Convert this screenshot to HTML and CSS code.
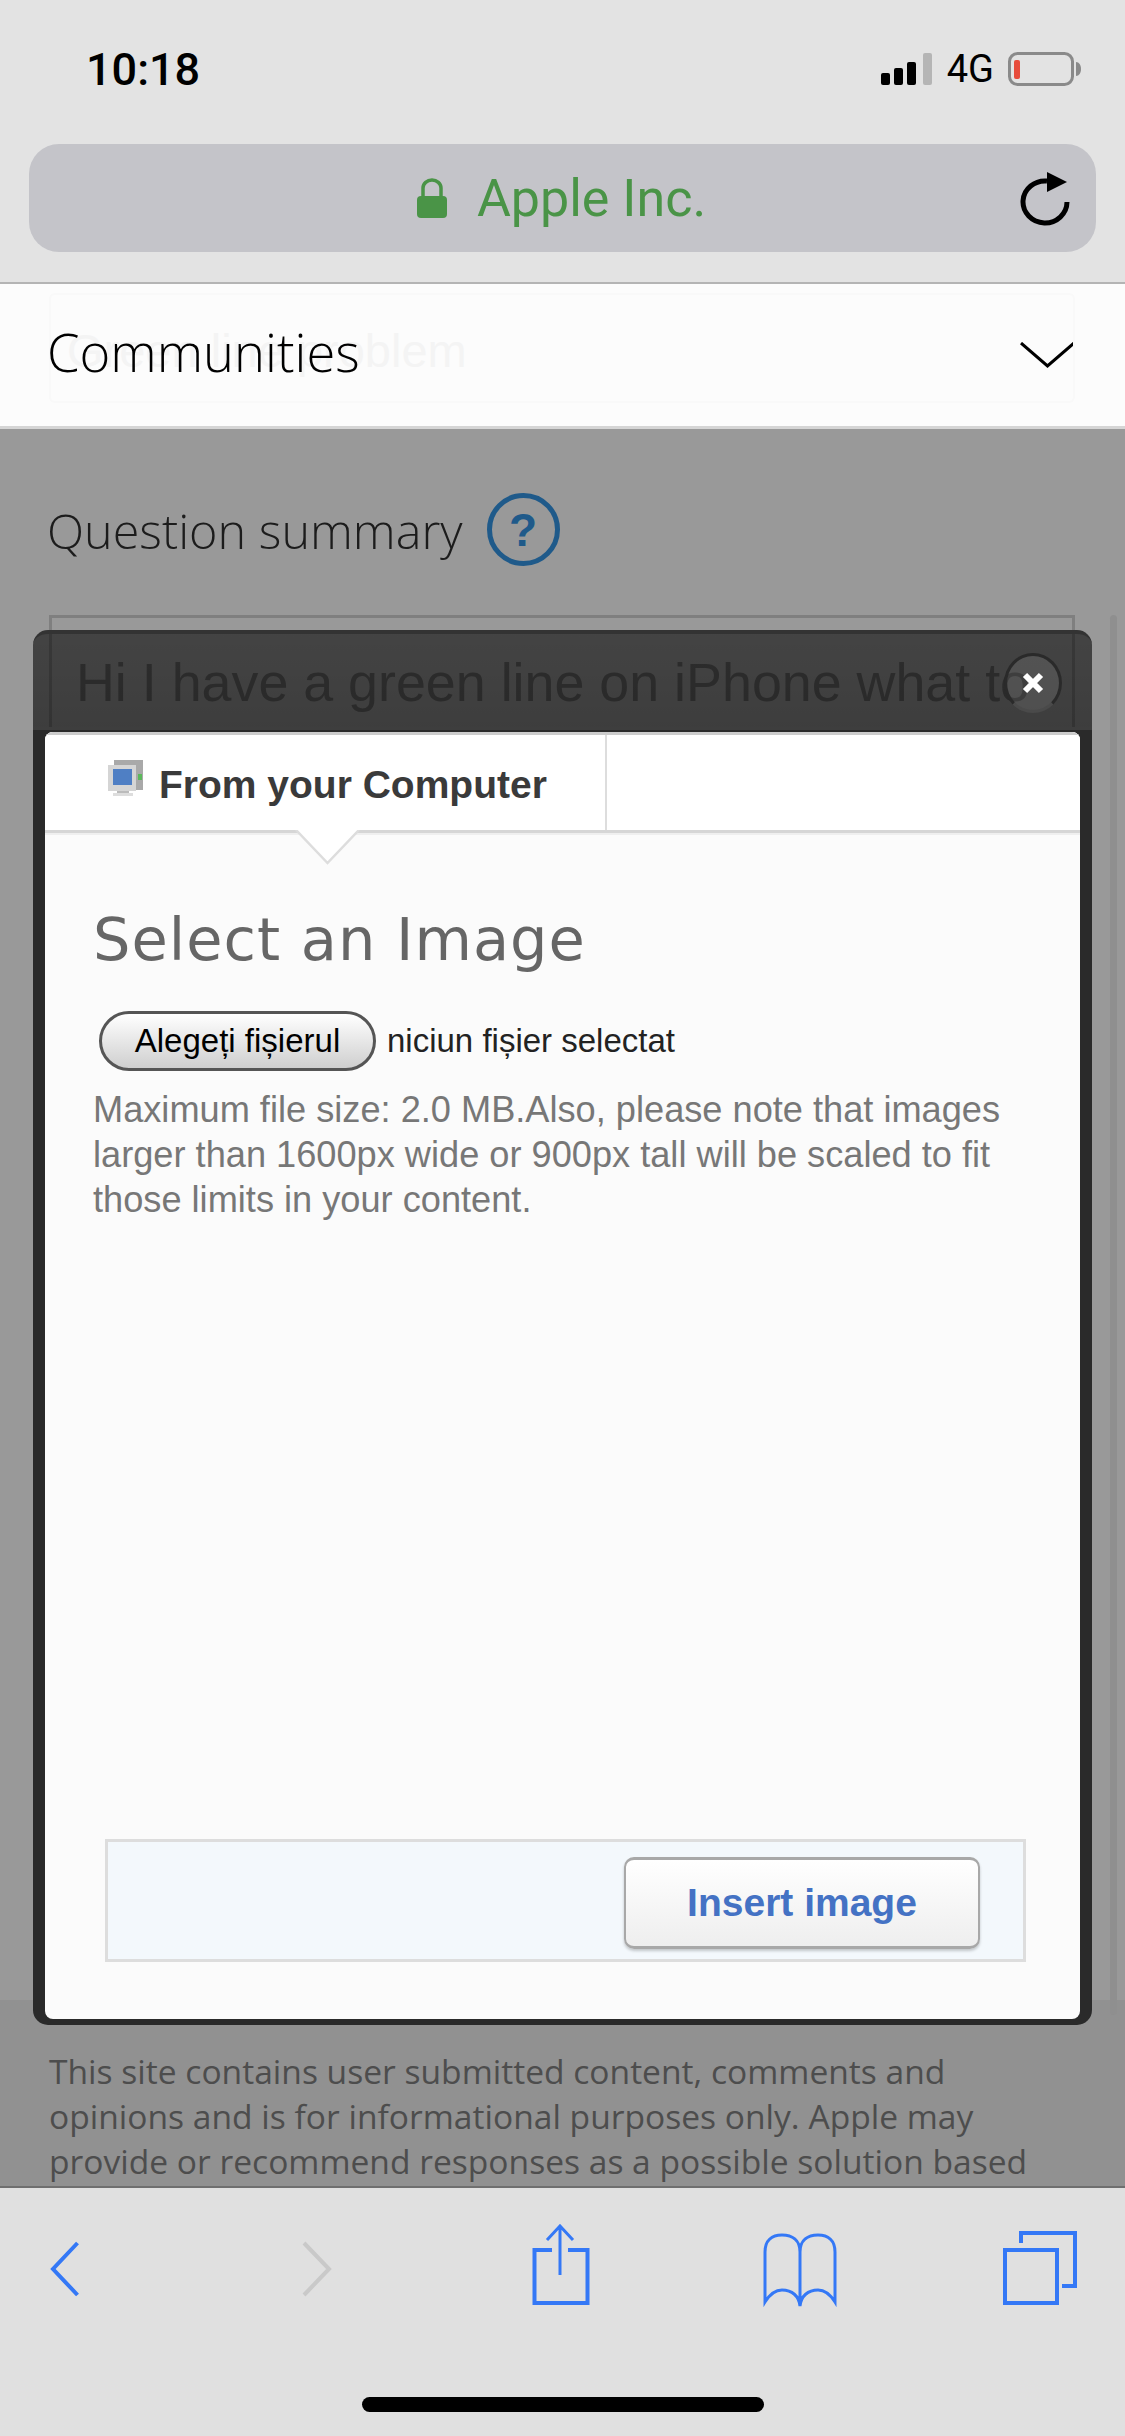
FILE: index.html
```html
<!DOCTYPE html>
<html lang="en">
<head>
  <meta charset="UTF-8">
  <title>Apple Communities</title>
  <link rel="stylesheet" href="styles.css">
</head>
<body>
  <div class="phone">
    <!-- Safari chrome -->
    <div class="chrome">
      <div class="status">
        <span class="time">10:18</span>
        <div class="status-right">
          <svg class="signal" width="51" height="32" viewBox="0 0 51 32">
            <rect x="0" y="20" width="9" height="12" rx="2"/>
            <rect x="13" y="15" width="9" height="17" rx="2"/>
            <rect x="26" y="9" width="9" height="23" rx="2"/>
            <rect x="42" y="0" width="9" height="32" rx="2" fill="#b5b5b5"/>
          </svg>
          <span class="network">4G</span>
          <svg class="battery" width="73" height="34" viewBox="0 0 73 34">
            <rect x="1.5" y="1.5" width="63" height="31" rx="8" fill="none" stroke="#8a8a8a" stroke-width="3"/>
            <rect x="6" y="8" width="6" height="19" rx="2" fill="#e74c3c"/>
            <path d="M68 10c3 0 5 3 5 7s-2 7-5 7z" fill="#8a8a8a"/>
          </svg>
        </div>
      </div>
      <div class="url-bar">
        <svg class="lock" width="30" height="40" viewBox="0 0 30 40">
          <path d="M6 19V10a9 8 0 0 1 18 0v9" fill="none" stroke="#4a9447" stroke-width="3.5"/>
          <rect x="0" y="18" width="30" height="22" rx="4" fill="#4a9447"/>
        </svg>
        <span class="url-text">Apple Inc.</span>
        <svg class="reload" width="50" height="56" viewBox="0 0 50 56">
          <path d="M27 11A22 21 0 1 0 47 32" fill="none" stroke="#000" stroke-width="5"/>
          <polygon points="27,2 47,12 27,22"/>
        </svg>
      </div>
    </div>

    <div class="communities">
      <div class="ghost-field">Green line problem</div>
      <span class="communities-label">Communities</span>
      <svg width="55" height="26" viewBox="0 0 55 26">
        <polyline points="1,1 27.5,24 54,1" fill="none" stroke="#000" stroke-width="3"/>
      </svg>
    </div>

    <!-- Dimmed page with the upload dialog on top -->
    <div class="page">
      <div class="question">
        <div class="question-row">
          <span class="question-label">Question summary</span>
          <span class="help">?</span>
        </div>
        <div class="summary-input">Hi I have a green line on iPhone what to</div>
      </div>
      <div class="scrollbar"></div>

      <div class="legal">This site contains user submitted content, comments and opinions and is for informational purposes only. Apple may provide or recommend responses as a possible solution based</div>

      <div class="modal">
        <div class="modal-head">
          <button class="close">
            <svg width="22" height="22" viewBox="0 0 22 22">
              <path d="M3 3l16 16M19 3L3 19" stroke="#fff" stroke-width="6"/>
            </svg>
          </button>
        </div>
        <div class="modal-frame">
          <div class="modal-body">
            <div class="tabs">
              <div class="tab">
                <svg width="35" height="36" viewBox="0 0 35 36">
                  <rect x="6" y="0" width="29" height="30" fill="#a9a9a9"/>
                  <rect x="0" y="5" width="28" height="26" fill="#d5d5d5"/>
                  <rect x="5" y="9" width="19" height="16" fill="#4f7fc4"/>
                  <rect x="9" y="31" width="12" height="2" fill="#bbb"/>
                  <rect x="5" y="33" width="20" height="3" fill="#ddd"/>
                  <rect x="30" y="14" width="4" height="6" fill="#5cb85c"/>
                </svg>
                <span>From your Computer</span>
              </div>
              <div class="tab-empty"></div>
              <svg class="tab-arrow" width="65" height="35" viewBox="0 0 65 35">
                <polyline points="1,0 32.5,33 64,0" fill="#fff" stroke="#ddd" stroke-width="2.5"/>
              </svg>
            </div>
            <div class="upload">
              <h1>Select an Image</h1>
              <div class="file-row">
                <button class="file-btn">Alegeți fișierul</button>
                <span class="file-name">niciun fișier selectat</span>
              </div>
              <p>Maximum file size: 2.0 MB.Also, please note that images larger than 1600px wide or 900px tall will be scaled to fit those limits in your content.</p>
            </div>
            <div class="modal-foot">
              <button class="insert">Insert image</button>
            </div>
          </div>
        </div>
      </div>
    </div>

    <!-- Safari toolbar -->
    <div class="toolbar">
      <div class="toolbar-icons">
        <svg width="100" height="90" viewBox="0 0 100 90">
          <polyline points="62.5,19 38,45 62.5,71" fill="none" stroke="#3478f6" stroke-width="4"/>
        </svg>
        <svg width="100" height="90" viewBox="0 0 100 90">
          <polyline points="38,19 63,45 38,71" fill="none" stroke="#c9c9c9" stroke-width="4"/>
        </svg>
        <svg width="100" height="90" viewBox="0 0 100 90" fill="none" stroke="#3478f6">
          <path d="M42 26H24.500V79H77.500V26H58" stroke-width="4"/>
          <path d="M50 2V51M37 16L50 2L63 16" stroke-width="3"/>
        </svg>
        <svg width="100" height="90" viewBox="0 0 100 90" fill="none" stroke="#3478f6" stroke-width="3">
          <path d="M15 78V28C15 16 22 11 32 11C42 11 50 16 50 28C50 16 58 11 68 11C78 11 85 16 85 28V78C80 70 74 66 68 66C58 66 51 72 50 82C49 72 42 66 32 66C26 66 20 70 15 78ZM50 28V82"/>
        </svg>
        <svg width="100" height="90" viewBox="0 0 100 90" fill="none" stroke="#3478f6" stroke-width="4">
          <path d="M31 19V9H85V62H72"/>
          <rect x="15" y="26" width="52" height="53"/>
        </svg>
      </div>
      <div class="home-bar"></div>
    </div>
  </div>
</body>
</html>
```

FILE: styles.css
```css
body {
  margin: 0;
  font-family: "Liberation Sans", Arial, sans-serif;
}

.phone {
  display: flex;
  flex-direction: column;
  width: 1125px;
  height: 2436px;
  overflow: hidden;
}

/* Top chrome */
.chrome {
  height: 282px;
  padding-top: 44px;
  box-sizing: border-box;
  background-color: #e3e3e3;
}

.status {
  display: flex;
  justify-content: space-between;
  align-items: center;
  height: 50px;
  padding: 0 44px 0 86px;
}

.time {
  font-family: Roboto, sans-serif;
  font-size: 45px;
  font-weight: 500;
  color: #000;
}

.status-right {
  display: flex;
  align-items: center;
}

.network {
  margin: 0 14px 0 15px;
  font-family: Roboto, sans-serif;
  font-size: 38px;
  color: #000;
}

.url-bar {
  position: relative;
  display: flex;
  justify-content: center;
  align-items: center;
  gap: 30px;
  height: 108px;
  margin: 50px 29px 0;
  padding-right: 2px;
  background-color: #c4c4c9;
  border-radius: 30px;
}

.url-text {
  font-family: Roboto, sans-serif;
  font-size: 52px;
  color: #4a9447;
}

.reload {
  position: absolute;
  top: 26px;
  right: 26px;
}

/* Communities bar */
.communities {
  position: relative;
  display: flex;
  justify-content: space-between;
  align-items: center;
  height: 147px;
  padding: 0 50px 0 47px;
  box-sizing: border-box;
  background-color: #fcfcfc;
  border-top: 2px solid #b4b4b4;
  border-bottom: 3px solid #d5d5d5;
}

.communities-label {
  position: relative;
  margin-bottom: 8px;
  font-family: "Open Sans", sans-serif;
  font-size: 52.5px;
  font-weight: 300;
  color: #000;
}

.ghost-field {
  position: absolute;
  top: 9px;
  left: 49px;
  width: 1026px;
  height: 110px;
  box-sizing: border-box;
  padding-left: 16px;
  line-height: 112px;
  font-size: 47px;
  color: #f4f4f4;
  border: 2px solid #f9f9f9;
  border-radius: 6px;
}

/* Dimmed page */
.page {
  position: relative;
  flex: 1;
  display: flex;
  flex-direction: column;
  justify-content: space-between;
  background-color: #999;
  overflow: hidden;
}

.question {
  padding: 64px 50px 0 49px;
}

.question-row {
  display: flex;
  align-items: center;
  gap: 24px;
}

.question-label {
  margin-left: -2px;
  font-family: "Open Sans", sans-serif;
  font-size: 48.5px;
  font-weight: 300;
  color: #1c1c1c;
}

.help {
  display: flex;
  justify-content: center;
  align-items: center;
  width: 73px;
  height: 73px;
  box-sizing: border-box;
  font-size: 46px;
  font-weight: bold;
  color: #1f5a8a;
  border: 5px solid #1f5a8a;
  border-radius: 50%;
}

.summary-input {
  height: 112px;
  margin-top: 49px;
  padding: 33px 0 0 24px;
  box-sizing: border-box;
  overflow: hidden;
  white-space: nowrap;
  font-size: 53.8px;
  color: #666;
  border: 3px solid #7f7f7f;
  border-bottom: none;
}

.scrollbar {
  position: absolute;
  top: 186px;
  right: 8px;
  width: 7px;
  height: 1400px;
  background-color: #8f8f8f;
  border-radius: 4px;
}

.legal {
  height: 186px;
  padding: 49px 91px 0 49px;
  box-sizing: border-box;
  overflow: hidden;
  font-family: "Open Sans", sans-serif;
  font-size: 33.6px;
  line-height: 45px;
  color: #4d4d4d;
  background-color: #919191;
}

/* Upload dialog */
.modal {
  position: absolute;
  top: 201px;
  left: 33px;
  width: 1059px;
  height: 1395px;
  display: flex;
  flex-direction: column;
}

.modal-head {
  position: relative;
  height: 100px;
  box-sizing: border-box;
  background: linear-gradient(rgba(0, 0, 0, 0.56), rgba(0, 0, 0, 0.6));
  border-top: 4px solid #333;
  border-bottom: 3px solid #3e3e3e;
  border-radius: 15px 15px 0 0;
}

.close {
  position: absolute;
  top: 19px;
  right: 30px;
  display: flex;
  justify-content: center;
  align-items: center;
  width: 58px;
  height: 60px;
  padding: 0;
  background-color: rgba(255, 255, 255, 0.09);
  border: 3px solid #2a2a2a;
  border-bottom-color: #4a4a4a;
  border-radius: 50%;
}

.modal-frame {
  flex: 1;
  display: flex;
  padding: 2px 12px 6px;
  background-color: #2a2a2a;
  border-radius: 0 0 15px 15px;
}

.modal-body {
  flex: 1;
  display: flex;
  flex-direction: column;
  background-color: #fbfbfb;
  border-radius: 8px;
  overflow: hidden;
}

.tabs {
  position: relative;
  display: flex;
  flex-shrink: 0;
  height: 101px;
  margin-bottom: 2px;
  box-sizing: border-box;
  background-color: #fff;
  border-top: 3px solid #ccc;
  border-bottom: 3px solid #d6d6d6;
  box-shadow: 0 2px 0 #efefef;
}

.tab {
  display: flex;
  align-items: center;
  gap: 16px;
  width: 562px;
  padding: 5px 0 0 63px;
  box-sizing: border-box;
  font-size: 39px;
  font-weight: bold;
  color: #3a3a3a;
  border-right: 2px solid #ddd;
}

.tab svg {
  margin-bottom: 15px;
}

.tab-empty {
  flex: 1;
}

.tab-arrow {
  position: absolute;
  top: 95px;
  left: 250px;
}

.upload {
  padding: 0 48px;
}

.upload h1 {
  margin: 70px 0 0;
  font-family: "DejaVu Sans", sans-serif;
  font-size: 59px;
  font-weight: normal;
  letter-spacing: 1px;
  color: #666;
}

.file-row {
  display: flex;
  align-items: center;
  gap: 11px;
  margin: 37px 0 0 6px;
}

.file-btn {
  width: 277px;
  height: 60px;
  padding: 0;
  font-family: "Liberation Sans", Arial, sans-serif;
  font-size: 33px;
  color: #000;
  background: linear-gradient(#fff, #cfcfcf);
  border: 3px solid #555;
  border-radius: 30px;
}

.file-name {
  font-size: 33px;
  color: #222;
}

.upload p {
  margin: 16px 0 0;
  font-size: 36.2px;
  line-height: 45px;
  color: #777;
}

.modal-foot {
  display: flex;
  justify-content: flex-end;
  height: 123px;
  box-sizing: border-box;
  margin: auto 54px 57px 60px;
  padding: 15px 43px 0 0;
  background-color: #f3f8fc;
  border: 3px solid #ddd;
}

.insert {
  width: 356px;
  height: 92px;
  padding: 0;
  font-family: "Liberation Sans", Arial, sans-serif;
  font-size: 39px;
  font-weight: bold;
  color: #4472c4;
  background: linear-gradient(#fff, #eee);
  border: 2px solid #a8a8a8;
  border-top-width: 3px;
  border-bottom-width: 3px;
  border-radius: 10px;
  box-shadow: 0 2px 3px rgba(0, 0, 0, 0.2);
}

/* Bottom toolbar */
.toolbar {
  height: 250px;
  box-sizing: border-box;
  background-color: #e0e0e0;
  border-top: 2px solid #6f6f6f;
}

.toolbar-icons {
  display: grid;
  grid-template-columns: 251px 244px 240px 240px 100px;
  padding: 36px 0 0 15px;
}

.home-bar {
  width: 402px;
  height: 15px;
  margin: 83px 0 0 362px;
  background-color: #000;
  border-radius: 8px;
}
```
